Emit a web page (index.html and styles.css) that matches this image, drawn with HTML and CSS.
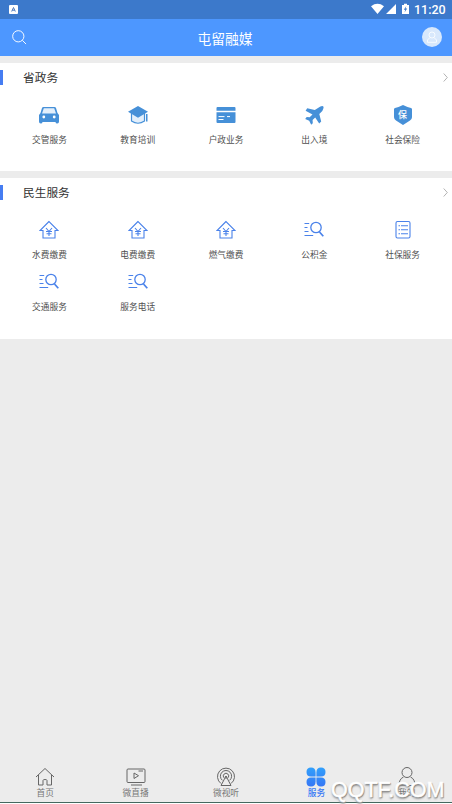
FILE: index.html
```html
<!DOCTYPE html>
<html lang="zh-CN">
<head>
<meta charset="utf-8">
<title>屯留融媒</title>
<link rel="stylesheet" href="styles.css">
</head>
<body>
<svg class="defs" aria-hidden="true">
  <symbol id="house" viewBox="0 0 20 20"><path d="M10 1.500 1 10.500h3V18h12v-7.500h3z"/><path d="m7 8 3 3.500L13 8M10 11.500V16M7 11.500h6M7.500 13.700h5"/></symbol>
  <symbol id="query" viewBox="0 0 20 20"><path d="M.5 3.500h4.700M.5 7.500h3M.5 11.500h4M.5 15.500h8.700"/><circle cx="12" cy="7.500" r="5.200" stroke-width="1.300"/><path d="m15.500 12 3.800 4.300" stroke-width="1.700"/></symbol>
</svg>
<div class="app">
  <div class="status">
    <svg class="app-badge" viewBox="0 0 9 9"><rect width="9" height="9" rx="1" fill="#fff"/><path d="m2.700 6.500 1.800-4 1.800 4M3.300 5.200h2.400" fill="none" stroke="#4d79bb"/></svg>
    <svg class="signals" viewBox="0 0 42 12"><path d="M0 3.200Q6.500-1.500 13 3.200L6.500 11zM15 11 25 1v10zM31 2h2V.8h3V2h2v9h-7z" fill="#fff"/><path d="m35.300 3-2.500 3.800h1.500L33.500 9.500l2.700-4h-1.600z" fill="#3c79cb"/></svg>
    <span class="clock">11:20</span>
  </div>
  <header class="header">
    <svg class="search" viewBox="0 0 16 16"><circle cx="6.700" cy="6.700" r="6"/><path d="m11 11 4 4"/></svg>
    <h1>屯留融媒</h1>
    <span class="avatar"><svg viewBox="0 0 12 12"><circle cx="6" cy="4" r="3"/><path d="M4 6.500 1.500 9v2.300h9V9L8 6.500"/></svg></span>
  </header>

  <section class="card card-gov">
    <div class="card-head"><h2>省政务</h2><svg class="more" viewBox="0 0 5 9"><path d="m.7.500 3.600 4-3.600 4"/></svg></div>
    <div class="grid">
      <div class="item"><svg class="icon solid" viewBox="0 0 20 20"><path d="M4.500 2h11q1.200 0 1.600 1.200L18.500 8 20 10v6.500q0 2-1.700 2-1.800 0-1.800-1.500h-13q0 1.500-1.800 1.500Q0 18.500 0 16.500V10l1.500-2 1.400-4.800Q3.300 2 4.500 2"/><path class="tint" d="M4.800 3.200h10.400L17 8.500H3z"/><circle class="hole" cx="4.800" cy="12" r="1.400"/><circle class="hole" cx="15.200" cy="12" r="1.400"/></svg><span>交管服务</span></div>
      <div class="item"><svg class="icon solid" viewBox="0 0 20 20"><path class="tint line" d="M3.500 8v8q6.500 4.500 13 0V8"/><path d="m10 1 10 5.800-10 6L0 6.800zM18 9h1.500v7.500H18z"/></svg><span>教育培训</span></div>
      <div class="item"><svg class="icon solid" viewBox="0 0 20 20"><path d="M1.500 2h17q1 0 1 1v2.700H.5V3q0-1 1-1M.5 7.300h19V17q0 1-1 1h-17q-1 0-1-1z"/><path class="cut" d="M2.500 11.600h6M11 11.600h3M2.500 14.500h5"/></svg><span>户政业务</span></div>
      <div class="item"><svg class="icon solid" viewBox="0 0 20 20"><path d="M14 3Q17.500.4 19 1.200t-.7 4.700l-3 3 1.900 7.700-2 1.800-4-6-2.600 2.600.2 3.200-1.600 1.500-2-4-4-1.800 1.500-1.800 3 .2 2.800-2.900L1.600 5.800l1.600-2.500L10.800 5z"/></svg><span>出入境</span></div>
      <div class="item"><div class="shield"><svg class="icon solid" viewBox="0 0 20 20"><path d="M10 0q5 2.500 8 3 1 .3 1 1.300v8q0 2-2 3.300L10 20l-7-4.400q-2-1.300-2-3.300v-8Q1 3.300 2 3q3-.5 8-3"/></svg><b>保</b></div><span>社会保险</span></div>
    </div>
  </section>

  <section class="card card-life">
    <div class="card-head"><h2>民生服务</h2><svg class="more" viewBox="0 0 5 9"><path d="m.7.500 3.600 4-3.600 4"/></svg></div>
    <div class="grid">
      <div class="item"><svg class="icon stroke"><use href="#house"/></svg><span>水费缴费</span></div>
      <div class="item"><svg class="icon stroke"><use href="#house"/></svg><span>电费缴费</span></div>
      <div class="item"><svg class="icon stroke"><use href="#house"/></svg><span>燃气缴费</span></div>
      <div class="item"><svg class="icon stroke"><use href="#query"/></svg><span>公积金</span></div>
      <div class="item"><svg class="icon stroke" viewBox="0 0 20 20"><rect x="3" y="1.500" width="14" height="16.500" rx="1.500"/><path d="M5.500 5.700H7M8 5.700h7M5.500 9.700H7M8 9.700h7M5.500 13.700H7M8 13.700h7"/></svg><span>社保服务</span></div>
      <div class="item"><svg class="icon stroke"><use href="#query"/></svg><span>交通服务</span></div>
      <div class="item"><svg class="icon stroke"><use href="#query"/></svg><span>服务电话</span></div>
    </div>
  </section>

  <nav class="tabs">
    <div class="tab"><svg viewBox="0 0 20 20"><path d="m1 10 9-8.500 9 8.500M3.500 8v10H8v-4.500q0-1 2-1t2 1V18h4.500V8"/></svg><span>首页</span></div>
    <div class="tab"><svg viewBox="0 0 20 20"><rect x="1" y="2" width="18" height="13.500" rx="1"/><path d="m8 6 4.500 2.700L8 11.500zM5 18h11M12.500 4H17"/></svg><span>微直播</span></div>
    <div class="tab"><svg viewBox="0 0 20 20"><path d="M5 16.500a8.500 8.500 0 1 1 10 0M6.300 13.300a5.600 5.600 0 1 1 7.400 0M8 10.800a2.700 2.700 0 1 1 4 0M10 9l-5 9.500h10zM10 9v3"/></svg><span>微视听</span></div>
    <div class="tab active"><svg viewBox="0 0 20 20"><defs><linearGradient id="leaf" x2="0" y2="1"><stop stop-color="#32a0fb"/><stop offset="1" stop-color="#3677f5"/></linearGradient></defs><path fill="url(#leaf)" stroke="none" d="M5 .5q4.600 0 4.600 5v4H5Q.5 9.500.5 5T5 .5m10 0q4.500 0 4.500 4.500T15 9.500h-4.600v-4q0-5 4.600-5M5 10.500h4.600v4q0 5-4.600 5-4.500 0-4.500-4.500T5 10.500m5.400 0H15q4.500 0 4.500 4.500T15 19.500q-4.600 0-4.600-5z"/></svg><span>服务</span></div>
    <div class="tab"><svg viewBox="0 0 20 20"><circle cx="10" cy="5.500" r="5"/><path d="M6.500 10Q2 12 2 18.500h16q0-6.500-4.500-8.500"/></svg><span>我的</span></div>
  </nav>
  <div class="watermark">QQTF.COM</div>
</div>
</body>
</html>
```

FILE: styles.css
```css
* { box-sizing: border-box; }
body { margin: 0; background: #ececec; font-family: "Noto Sans CJK SC", sans-serif; color: #505050; }
h1, h2 { margin: 0; font-weight: 400; }
svg { display: block; flex: none; }
.defs { position: absolute; width: 0; height: 0; }
.app { position: relative; height: 804px; display: flex; flex-direction: column; overflow: hidden; }

.status { height: 19px; flex: none; display: flex; align-items: center; padding: 0 7px 0 9px; background: #3c79cb; color: #fff; }
.app-badge { width: 9px; height: 9px; }
.signals { width: 42px; height: 12px; margin-left: auto; margin-top: -1px; }
.clock { font: 500 12.500px/19px Roboto, sans-serif; width: 31px; margin-left: 1px; white-space: nowrap; }

.header { height: 37px; flex: none; display: grid; grid-template-columns: 40px 1fr 40px; align-items: center; padding: 0 10px 0 12px; background: #4d97ff; color: #fff; }
.header h1 { text-align: center; font-size: 13.800px; line-height: 20px; padding-right: 4px; }
.search { width: 15px; height: 15px; fill: none; stroke: #fff; stroke-width: 1; }
.avatar { width: 20px; height: 20px; border-radius: 50%; background: #d8e8fc; justify-self: end; display: grid; place-items: center; margin-top: -1px; }
.avatar svg { width: 12px; height: 12px; fill: none; stroke: #fff; stroke-width: .8; }

.card { background: #fff; margin-top: 7px; flex: none; }
.card-gov { height: 108px; }
.card-life { height: 160.500px; }
.card-head { height: 29px; display: flex; align-items: center; justify-content: space-between; padding-right: 4px; }
.card-head h2 { font-size: 11.700px; line-height: 13px; height: 15px; border-left: 3px solid #467df2; padding-left: 20px; color: #333; }
.more { width: 5px; height: 9px; fill: none; stroke: #aaa; stroke-width: .9; }
.grid { display: grid; grid-template-columns: repeat(5, 1fr); grid-auto-rows: 52.300px; padding: 13px 5.300px 0; }
.item { display: flex; flex-direction: column; align-items: center; font-size: 8.700px; line-height: 12px; gap: 9px; }
.icon { width: 20px; height: 20px; }
.solid { fill: #4690d8; }
.tint { fill: #e3effb; }
.line { stroke: #4690d8; stroke-width: 1.200; }
.hole { fill: #fff; }
.cut { stroke: #fff; fill: none; stroke-width: 1; }
.stroke { fill: none; stroke: #4a82ea; stroke-width: 1.100; }
.shield { display: grid; place-items: center; }
.shield > * { grid-area: 1 / 1; }
.shield b { color: #fff; font-size: 9px; line-height: 12px; font-weight: 500; margin-top: -1px; }

.tabs { margin-top: auto; height: 37px; flex: none; display: grid; grid-template-columns: repeat(5, 1fr); border-bottom: 1px solid #fff; box-shadow: inset 0 -1px #45685f; }
.tab { display: flex; flex-direction: column; align-items: center; font-size: 8.700px; line-height: 12px; color: #777; }
.tab svg { width: 20px; height: 20px; fill: none; stroke: #666; stroke-width: 1; }
.active { color: #3979f5; font-weight: 500; }
.watermark { position: absolute; left: 331px; bottom: 2px; font: 21.500px/24px "Liberation Sans", sans-serif; color: #fff; -webkit-text-stroke: .5px #fff; text-shadow: 1px 1px 1px #888, 0 2px 2px #999; white-space: nowrap; }
```
